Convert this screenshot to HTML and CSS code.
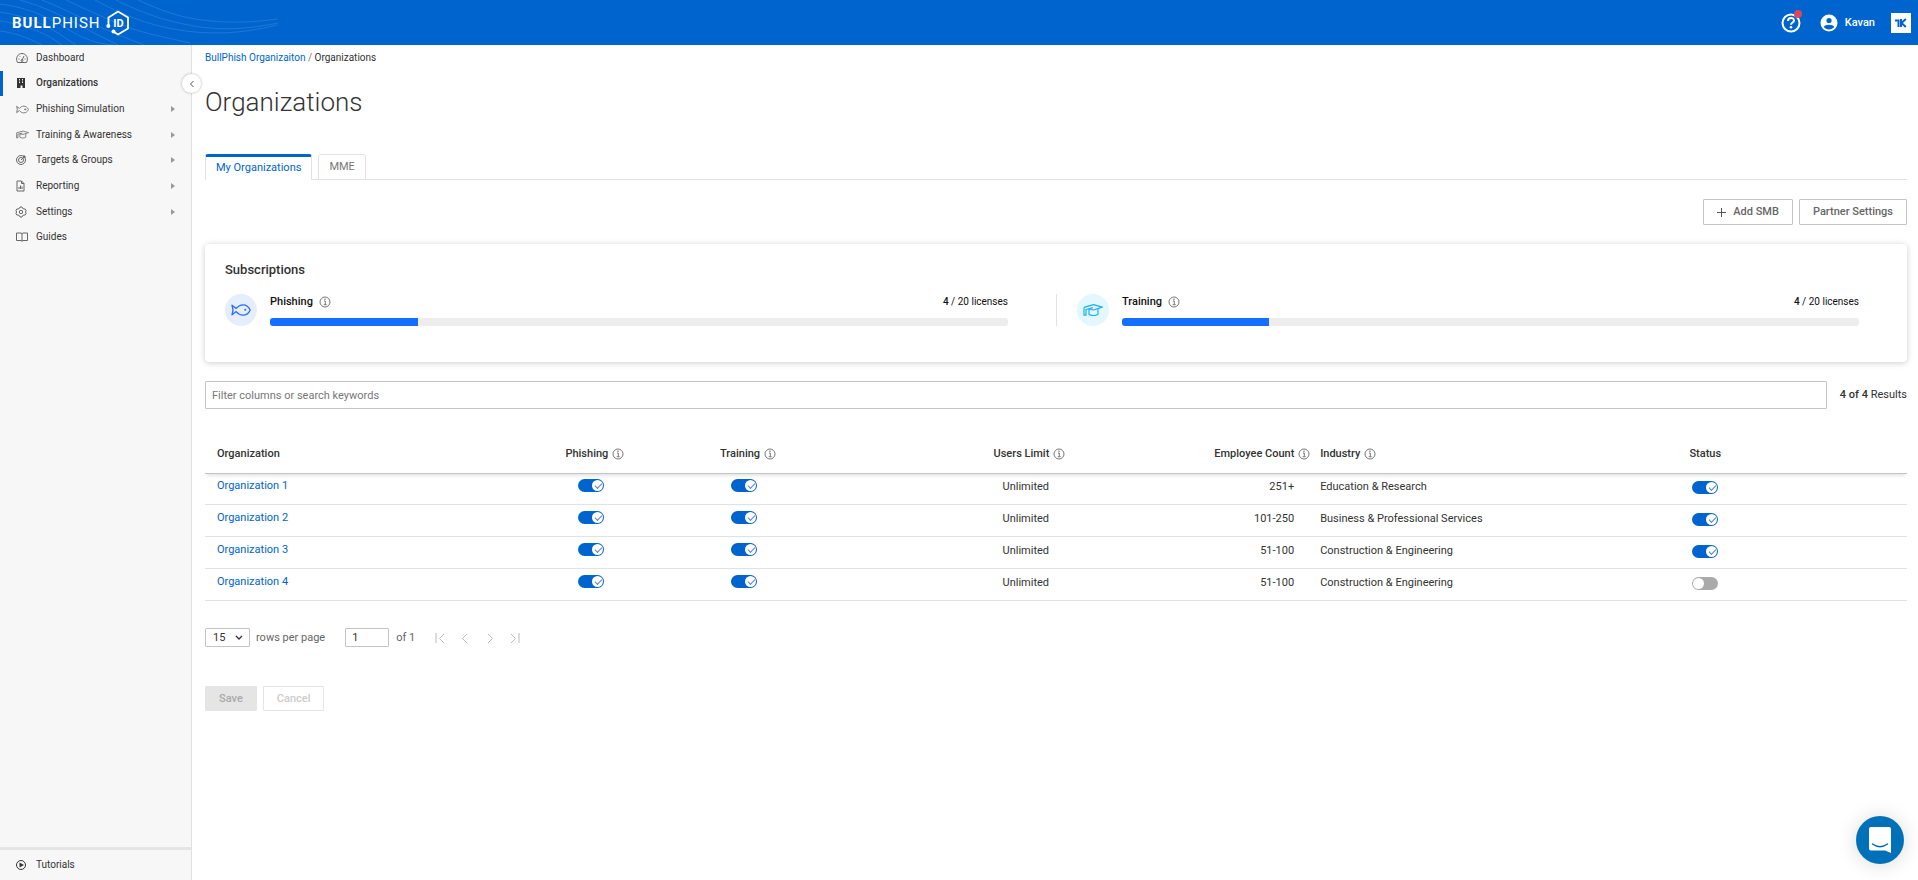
FILE: index.html
```html
<!DOCTYPE html>
<html lang="en">
<head>
    <meta charset="UTF-8">
    <meta name="viewport" content="width=device-width, initial-scale=1.0">
    <title>Organizations - BullPhish ID</title>
    <link rel="stylesheet" href="styles.css">
</head>
<body>
    <!-- Shared icons -->
    <svg class="sprite" aria-hidden="true">
        <symbol id="info" viewBox="0 0 12 12">
            <circle cx="6" cy="6" r="5" fill="none" stroke="currentColor"/>
            <path d="M5 5h1.3v3.5M4.7 8.7h3" fill="none" stroke="currentColor"/>
            <circle cx="6" cy="3.3" r=".8" fill="currentColor"/>
        </symbol>
        <symbol id="fish" viewBox="0 0 20 12">
            <path d="M1 1.2 5.2 4.4C7.300 1.900 9.600 .8 12 .8c3.200 0 5.900 2.200 7.200 5.200-1.300 3-4 5.200-7.200 5.200-2.400 0-4.700-1.100-6.800-3.600L1 10.800 2 6z" fill="none" stroke="currentColor" stroke-width="1.300" stroke-linejoin="round"/>
            <circle cx="14.200" cy="5.800" r="1" fill="currentColor"/>
        </symbol>
        <symbol id="cap" viewBox="0 0 20 12">
            <path d="M1 3.400 10.500.7l8.800 2.400-8.800 2.900-4.500-1M6 5.500v4.700c2.500 1.600 6.500 1.600 9 0V5.300M1 3.400v7.800h2V5.500l7-1.800" fill="none" stroke="currentColor" stroke-width="1.200" stroke-linejoin="round"/>
        </symbol>
    </svg>

    <header class="topbar">
        <svg class="waves" viewBox="0 0 280 45" aria-hidden="true">
            <path d="M0 4c30 4 50 14 66 24s30 16 48 17M0 12c26 4 44 12 58 21l18 12M0 21c22 3 36 9 50 16l12 8M0 31c16 2 28 7 42 14M20 0c34 10 54 22 74 33l24 12M42 0c30 12 50 24 74 34l28 11M66 0c30 14 54 26 84 34l40 9M95 0c26 14 52 25 84 30s62 4 98-5M116 0c24 12 48 21 78 26s54 3 84-3M138 0c22 10 40 17 64 20s48 3 75-1"/>
        </svg>
        <a href="#" class="logo">
            <span class="logo-text"><b>BULL</b>PHISH</span>
            <svg width="24" height="26" viewBox="0 0 24 26" aria-hidden="true">
                <path d="M2.500 15V7.500L12 1.500l10 6v11L12 24.500 8 22" fill="none" stroke="#fff" stroke-width="1.800"/>
                <circle cx="2.300" cy="16" r="2" fill="#fff"/>
                <circle cx="7.500" cy="21.500" r="2" fill="#fff"/>
                <text x="12.500" y="17" class="logo-id">ID</text>
            </svg>
        </a>
        <div class="topbar-right">
            <button class="icon-button help" aria-label="Help">
                <svg width="20" height="20" viewBox="0 0 20 20">
                    <circle cx="10" cy="10" r="8.500" fill="none" stroke="#fff" stroke-width="2"/>
                    <path d="M7 8c0-4 6-4 6-.5 0 2-3 2-3 4.200" fill="none" stroke="#fff" stroke-width="2"/>
                    <circle cx="10" cy="14.300" r="1.300" fill="#fff"/>
                </svg>
                <span class="badge"></span>
            </button>
            <button class="icon-button user">
                <svg width="18" height="18" viewBox="0 0 18 18">
                    <circle cx="9" cy="9" r="8.500" fill="#fff"/>
                    <circle cx="9" cy="6.500" r="2.600" fill="#0064ce"/>
                    <path d="M3.800 13c1-3 9.400-3 10.400 0-2.500 3.300-7.900 3.300-10.400 0z" fill="#0064ce"/>
                </svg>
                Kavan
            </button>
            <button class="icon-button" aria-label="Switch application">
                <svg width="20" height="20" viewBox="0 0 20 20">
                    <path d="M0 0h20v20H0z" fill="#fff"/>
                    <path d="M4 7.500h3.500V14M10 6v8M14.800 6 10.500 10l4.300 4" fill="none" stroke="#0064ce" stroke-width="2"/>
                </svg>
            </button>
        </div>
    </header>

    <div class="layout">
        <aside class="sidebar">
            <nav class="menu">
                <a href="#">
                    <svg width="12" height="12" viewBox="0 0 12 12"><path d="M1.500 10.500C-1 6 2 1.500 6 1.500s7 4.500 4.500 9zM6 8l2-4M2.500 7h1M8.500 7h1M3.500 4l.6.6"/><circle cx="6" cy="8.500" r="1"/></svg>
                    <span>Dashboard</span>
                </a>
                <a href="#" class="active">
                    <svg width="12" height="12" viewBox="0 0 12 12"><path d="M1 1h8v10H6.500V8.500h-2V11H1z" fill="currentColor" stroke="none"/><path d="M3.500 2v5M6.500 2v5" stroke="#f7f7f7" stroke-dasharray="1.500 1"/></svg>
                    <span>Organizations</span>
                </a>
                <a href="#">
                    <svg width="13" height="9"><use href="#fish"/></svg>
                    <span>Phishing Simulation</span><i class="caret"></i>
                </a>
                <a href="#">
                    <svg width="13" height="9"><use href="#cap"/></svg>
                    <span>Training &amp; Awareness</span><i class="caret"></i>
                </a>
                <a href="#">
                    <svg width="12" height="12" viewBox="0 0 12 12"><circle cx="5" cy="6" r="4.500"/><circle cx="5" cy="6" r="2.500"/><path d="M5 6l4-4M8 1v2h2"/></svg>
                    <span>Targets &amp; Groups</span><i class="caret"></i>
                </a>
                <a href="#">
                    <svg width="12" height="12" viewBox="0 0 12 12"><path d="M1 1h4.500l2.500 2.500v7.500H1zM5.500 1v2.500H8M3 9V7M4.500 9V5.500M6 9V6.500"/></svg>
                    <span>Reporting</span><i class="caret"></i>
                </a>
                <a href="#">
                    <svg width="12" height="12" viewBox="0 0 12 12"><path d="M4 1h2l.5 1.300 1.500.7L9.200 3l1 1.800-.8 1.200.8 1.200-1 1.800L8 9l-1.500.7L6 11H4l-.5-1.300L2 9 .8 9-.1 7.200.7 6-.1 4.800.8 3 2 3l1.500-.7z"/><circle cx="5" cy="6" r="1.700"/></svg>
                    <span>Settings</span><i class="caret"></i>
                </a>
                <a href="#">
                    <svg width="12" height="10" viewBox="0 0 12 10"><path d="M.5 1H5l1 .7L7 1h4.500v7.500H7l-1 .8-1-.8H.5zM6 1.700v7.500"/></svg>
                    <span>Guides</span>
                </a>
            </nav>
            <a href="#" class="tutorials">
                <svg width="12" height="12" viewBox="0 0 12 12"><circle cx="5" cy="6" r="4.500"/><path d="M3.500 3.500 8 6 3.500 8.500z" fill="currentColor" stroke="none"/></svg>
                <span>Tutorials</span>
            </a>
            <button class="collapse" aria-label="Collapse menu">
                <svg width="6" height="8" viewBox="0 0 6 8"><path d="M4.500 1 1.500 4l3 3" fill="none" stroke="#555"/></svg>
            </button>
        </aside>

        <main class="content">
            <div class="breadcrumb"><a href="#">BullPhish Organizaiton</a> <span>/</span> Organizations</div>
            <h1>Organizations</h1>

            <div class="tabs" role="tablist">
                <button class="tab selected" role="tab" aria-selected="true">My Organizations</button>
                <button class="tab" role="tab" aria-selected="false">MME</button>
            </div>

            <div class="actions">
                <button class="btn">
                    <svg width="9" height="9" viewBox="0 0 9 9"><path d="M4.500 0v9M0 4.500h9" stroke="#555"/></svg>
                    Add SMB
                </button>
                <button class="btn">Partner Settings</button>
            </div>

            <section class="card">
                <h2>Subscriptions</h2>
                <div class="subscriptions">
                    <div class="subscription">
                        <div class="round phishing"><svg width="20" height="12"><use href="#fish"/></svg></div>
                        <div class="usage">
                            <div class="usage-head">
                                <h3>Phishing <svg class="info"><use href="#info"/></svg></h3>
                                <span><b>4</b> / 20 licenses</span>
                            </div>
                            <div class="bar"><div class="fill" style="width: 20%"></div></div>
                        </div>
                    </div>
                    <div class="subscription">
                        <div class="round training"><svg width="20" height="12"><use href="#cap"/></svg></div>
                        <div class="usage">
                            <div class="usage-head">
                                <h3>Training <svg class="info"><use href="#info"/></svg></h3>
                                <span><b>4</b> / 20 licenses</span>
                            </div>
                            <div class="bar"><div class="fill" style="width: 20%"></div></div>
                        </div>
                    </div>
                </div>
            </section>

            <div class="filter">
                <input type="text" placeholder="Filter columns or search keywords" aria-label="Filter">
                <span><b>4 of 4</b> Results</span>
            </div>

            <table class="orgs">
                <thead>
                    <tr>
                        <th class="col-org">Organization</th>
                        <th class="col-switch">Phishing <svg class="info"><use href="#info"/></svg></th>
                        <th class="col-switch">Training <svg class="info"><use href="#info"/></svg></th>
                        <th class="col-limit num">Users Limit <svg class="info"><use href="#info"/></svg></th>
                        <th class="col-count num">Employee Count <svg class="info"><use href="#info"/></svg></th>
                        <th class="col-industry">Industry <svg class="info"><use href="#info"/></svg></th>
                        <th class="col-status">Status</th>
                    </tr>
                </thead>
                <tbody>
                    <tr>
                        <td class="col-org"><a href="#">Organization 1</a></td>
                        <td class="col-switch"><input type="checkbox" class="switch" aria-label="Organization 1 phishing" checked></td>
                        <td class="col-switch"><input type="checkbox" class="switch" aria-label="Organization 1 training" checked></td>
                        <td class="num">Unlimited</td>
                        <td class="num">251+</td>
                        <td class="col-industry">Education &amp; Research</td>
                        <td class="col-status"><input type="checkbox" class="switch" aria-label="Organization 1 status" checked></td>
                    </tr>
                    <tr>
                        <td class="col-org"><a href="#">Organization 2</a></td>
                        <td class="col-switch"><input type="checkbox" class="switch" aria-label="Organization 2 phishing" checked></td>
                        <td class="col-switch"><input type="checkbox" class="switch" aria-label="Organization 2 training" checked></td>
                        <td class="num">Unlimited</td>
                        <td class="num">101-250</td>
                        <td class="col-industry">Business &amp; Professional Services</td>
                        <td class="col-status"><input type="checkbox" class="switch" aria-label="Organization 2 status" checked></td>
                    </tr>
                    <tr>
                        <td class="col-org"><a href="#">Organization 3</a></td>
                        <td class="col-switch"><input type="checkbox" class="switch" aria-label="Organization 3 phishing" checked></td>
                        <td class="col-switch"><input type="checkbox" class="switch" aria-label="Organization 3 training" checked></td>
                        <td class="num">Unlimited</td>
                        <td class="num">51-100</td>
                        <td class="col-industry">Construction &amp; Engineering</td>
                        <td class="col-status"><input type="checkbox" class="switch" aria-label="Organization 3 status" checked></td>
                    </tr>
                    <tr>
                        <td class="col-org"><a href="#">Organization 4</a></td>
                        <td class="col-switch"><input type="checkbox" class="switch" aria-label="Organization 4 phishing" checked></td>
                        <td class="col-switch"><input type="checkbox" class="switch" aria-label="Organization 4 training" checked></td>
                        <td class="num">Unlimited</td>
                        <td class="num">51-100</td>
                        <td class="col-industry">Construction &amp; Engineering</td>
                        <td class="col-status"><input type="checkbox" class="switch" aria-label="Organization 4 status"></td>
                    </tr>
                </tbody>
            </table>

            <div class="pager">
                <div class="select-box">
                    <select id="rows"><option>15</option></select>
                    <svg width="8" height="6" viewBox="0 0 8 6"><path d="M1 1l3 3 3-3" fill="none" stroke="#333" stroke-width="1.300"/></svg>
                </div>
                <label for="rows">rows per page</label>
                <input type="text" id="page" value="1">
                <label for="page">of 1</label>
                <div class="pager-buttons">
                    <button aria-label="First page"><svg width="10" height="12" viewBox="0 0 10 12"><path d="M1 1v10M9 2 4.500 6.500 9 11"/></svg></button>
                    <button aria-label="Previous page"><svg width="10" height="12" viewBox="0 0 10 12"><path d="M7 2 2.500 6.500 7 11"/></svg></button>
                    <button aria-label="Next page"><svg width="10" height="12" viewBox="0 0 10 12"><path d="M3 2l4.500 4.500L3 11"/></svg></button>
                    <button aria-label="Last page"><svg width="10" height="12" viewBox="0 0 10 12"><path d="M9 1v10M1 2l4.500 4.500L1 11"/></svg></button>
                </div>
            </div>

            <div class="form-buttons">
                <button class="btn save" disabled>Save</button>
                <button class="btn cancel" disabled>Cancel</button>
            </div>
        </main>
    </div>

    <button class="chat" aria-label="Open chat">
        <svg width="22" height="26" viewBox="0 0 22 26">
            <path d="M2 0h18a2 2 0 0 1 2 2v24l-6-2.500H2a2 2 0 0 1-2-2V2a2 2 0 0 1 2-2z" fill="#fff"/>
            <path d="M3.500 17c4.500 3.500 10.500 3.500 15 0" fill="none" stroke="#0071b9" stroke-width="1.500" stroke-linecap="round"/>
        </svg>
    </button>
</body>
</html>
```
FILE: styles.css
```css
/* Global */
* {
    margin: 0;
    padding: 0;
    box-sizing: border-box;
}
body {
    font-family: Roboto, sans-serif;
    font-size: 11px;
    line-height: 16px;
    color: #333;
    background-color: #fff;
    display: flex;
    flex-direction: column;
    min-height: 100vh;
}
a {
    color: #0064ce;
    text-decoration: none;
}
b {
    font-weight: 500;
}
button, input, select {
    font: inherit;
    color: inherit;
}
button {
    cursor: pointer;
}
.sprite {
    position: absolute;
    width: 0;
    height: 0;
}
.info {
    width: 12px;
    height: 12px;
    color: #777;
}

/* Top bar */
.topbar {
    position: relative;
    height: 45px;
    padding: 0 7px 0 12px;
    background-color: #0064ce;
    color: #fff;
    display: flex;
    align-items: center;
    justify-content: space-between;
}
.waves {
    position: absolute;
    left: 0;
    top: 0;
    width: 280px;
    height: 45px;
    fill: none;
    stroke: #1f78d6;
}
.logo {
    position: relative;
    display: flex;
    align-items: center;
    gap: 5px;
    color: #fff;
}
.logo-text {
    font-size: 15px;
    font-weight: 400;
    letter-spacing: 1px;
}
.logo-text b {
    font-weight: 700;
}
.logo-id {
    font-size: 11px;
    font-weight: 700;
    fill: #fff;
    text-anchor: middle;
}
.topbar-right {
    display: flex;
    align-items: center;
    gap: 16px;
}
.icon-button {
    position: relative;
    display: flex;
    align-items: center;
    gap: 7px;
    border: none;
    background: none;
    font-weight: 500;
}
.help {
    margin-right: 3px;
}
.badge {
    position: absolute;
    top: -3px;
    right: -1px;
    width: 8px;
    height: 8px;
    border-radius: 50%;
    background-color: #d9485a;
}

/* Layout */
.layout {
    flex: 1;
    display: flex;
}
.sidebar {
    position: relative;
    flex: none;
    width: 192px;
    background-color: #f7f7f7;
    border-right: 1px solid #e0e0e0;
    font-size: 10px;
    display: flex;
    flex-direction: column;
    justify-content: space-between;
}
.menu {
    height: 205px;
    display: flex;
    flex-direction: column;
}
.menu a {
    flex: 1;
    padding: 0 16px 0 13px;
    border-left: 3px solid transparent;
    color: #333;
    display: flex;
    align-items: center;
}
.menu svg, .tutorials svg {
    fill: none;
    stroke: currentColor;
    color: #666;
    overflow: visible;
}
.menu span, .tutorials span {
    margin-left: 8px;
}
.menu svg[width="13"] + span {
    margin-left: 7px;
}
.menu .active {
    border-left-color: #0064ce;
    font-weight: 500;
}
.menu .active svg {
    color: #333;
}
.caret {
    margin-left: auto;
    border: 3px solid transparent;
    border-left: 4px solid #999;
    border-right: none;
}
.tutorials {
    height: 33px;
    padding: 0 16px;
    border-top: 3px solid #e5e5e5;
    color: #333;
    display: flex;
    align-items: center;
}
.tutorials svg {
    color: #333;
}
.collapse {
    position: absolute;
    top: 29px;
    right: -10px;
    width: 19px;
    height: 19px;
    border: none;
    border-radius: 50%;
    background-color: #fff;
    box-shadow: 0 0 3px rgba(0, 0, 0, 0.3);
    display: flex;
    align-items: center;
    justify-content: center;
}
.content {
    flex: 1;
    padding: 5px 11px 0 13px;
}

/* Page heading and tabs */
.breadcrumb {
    font-size: 10px;
}
.breadcrumb span {
    color: #777;
}
h1 {
    margin-top: 20px;
    font-size: 26px;
    font-weight: 300;
    line-height: 32px;
}
.tabs {
    margin-top: 36px;
    height: 26px;
    border-bottom: 1px solid #e2e2e2;
    display: flex;
    gap: 6px;
}
.tab {
    height: 26px;
    padding: 0 10px;
    border: 1px solid #e2e2e2;
    border-radius: 3px 3px 0 0;
    background-color: #fff;
    color: #777;
}
.tab.selected {
    padding-bottom: 2px;
    border-top: 3px solid #0064ce;
    border-bottom: none;
    color: #0064ce;
}

/* Buttons */
.btn {
    height: 26px;
    padding: 0 13px;
    border: 1px solid #c4c4c4;
    border-radius: 1px;
    background-color: #fff;
    font-weight: 500;
    color: #666;
    display: flex;
    align-items: center;
    gap: 7px;
}
.actions {
    margin-top: 19px;
    display: flex;
    justify-content: flex-end;
    gap: 6px;
}

/* Subscriptions */
.card {
    margin-top: 19px;
    padding: 17px 0 36px;
    border-radius: 4px;
    box-shadow: 0 1px 6px rgba(0, 0, 0, 0.2);
}
.card h2 {
    margin-left: 20px;
    font-size: 13px;
    font-weight: 500;
    line-height: 18px;
}
.subscriptions {
    margin-top: 15px;
    display: grid;
    grid-template-columns: 1fr 1fr;
}
.subscription {
    padding: 0 48px 0 20px;
    display: flex;
    gap: 13px;
}
.subscription + .subscription {
    border-left: 1px solid #e2e2e2;
}
.round {
    width: 32px;
    height: 32px;
    border-radius: 50%;
    display: flex;
    align-items: center;
    justify-content: center;
}
.phishing {
    background-color: #e6eefc;
    color: #2b6bff;
}
.training {
    background-color: #e3f7fe;
    color: #1cb0f0;
}
.usage {
    flex: 1;
    display: flex;
    flex-direction: column;
    justify-content: space-between;
}
.usage-head {
    font-size: 10px;
    color: #111;
    display: flex;
    justify-content: space-between;
}
.usage-head h3 {
    font-size: 11px;
    font-weight: 500;
    display: flex;
    align-items: center;
    gap: 6px;
}
.bar {
    height: 8px;
    border-radius: 3px;
    background-color: #ededed;
    overflow: hidden;
}
.fill {
    height: 8px;
    background-color: #146eff;
}

/* Filter */
.filter {
    margin-top: 19px;
    display: flex;
    align-items: center;
    gap: 13px;
}
.filter input {
    flex: 1;
    height: 28px;
    padding: 0 6px;
    border: 1px solid #c4c4c4;
    border-radius: 1px;
}
.filter input::placeholder {
    color: #777;
}

/* Table */
.orgs {
    width: 100%;
    margin-top: 25px;
    table-layout: fixed;
    border-collapse: separate;
    border-spacing: 0;
}
.orgs thead {
    box-shadow: 0 1px 0 #c4c4c4, 0 5px 3px -2px rgba(0, 0, 0, 0.1);
}
.orgs th {
    height: 39px;
    padding: 0 12px;
    font-weight: 500;
    text-align: left;
    white-space: nowrap;
}
.orgs td {
    height: 32px;
    padding: 6px 12px 0;
    border-bottom: 1px solid #e2e2e2;
    vertical-align: top;
}
.orgs .info {
    margin-left: 1px;
    vertical-align: -3px;
}
.orgs .num {
    text-align: right;
}
/* keeps the heading text in line with the right-aligned values */
.num .info {
    margin-right: -16px;
}
th.col-org {
    width: 18.4%;
}
th.col-switch {
    width: 9%;
}
th.col-limit {
    width: 13.9%;
}
th.col-count {
    width: 14.4%;
}
th.col-industry {
    width: 11.6%;
}
.orgs .col-switch, .orgs .col-status {
    text-align: center;
}
.orgs .col-industry {
    padding: 6px 0 0 14px;
    white-space: nowrap;
}
.orgs th.col-industry {
    padding-top: 0;
}
.orgs td.col-org {
    padding-top: 5px;
}
.orgs td.col-switch {
    padding: 6px 19px 0 12px;
}
.orgs td.col-status {
    padding-top: 8px;
}

/* Switch */
.switch {
    appearance: none;
    width: 26px;
    height: 13px;
    border-radius: 7px;
    background-color: #aaa;
    display: block;
    margin: 0 auto;
    position: relative;
    cursor: pointer;
}
.switch::before {
    content: "";
    position: absolute;
    top: 1px;
    left: 1px;
    width: 11px;
    height: 11px;
    border-radius: 50%;
    background-color: #fff;
}
.switch:checked {
    background-color: #0064ce;
}
.switch:checked::before {
    left: 14px;
}
.switch:checked::after {
    content: "";
    position: absolute;
    top: 4px;
    left: 17px;
    width: 6px;
    height: 3px;
    border-left: 1px solid #5585cf;
    border-bottom: 1px solid #5585cf;
    transform: rotate(-45deg);
}

/* Pager */
.pager {
    margin-top: 27px;
    color: #666;
    display: flex;
    align-items: center;
}
.pager select, .pager input {
    height: 19px;
    border: 1px solid #c4c4c4;
    border-radius: 1px;
    background-color: #fff;
    color: #333;
}
.select-box {
    position: relative;
    margin-right: 6px;
    display: flex;
}
.select-box svg {
    position: absolute;
    right: 7px;
    top: 7px;
    pointer-events: none;
}
.pager select {
    appearance: none;
    width: 45px;
    padding-left: 7px;
}
.pager input {
    width: 44px;
    margin: 0 7px 0 20px;
    padding: 0 6px;
}
.pager-buttons {
    margin-left: 20px;
    display: flex;
    gap: 15px;
}
.pager-buttons button {
    border: none;
    background: none;
    display: flex;
}
.pager-buttons svg {
    fill: none;
    stroke: #bbb;
}

/* Save / cancel */
.form-buttons {
    margin-top: 39px;
    display: flex;
    gap: 6px;
}
.form-buttons .btn {
    height: 25px;
}
.save {
    border-color: #e5e5e5;
    background-color: #e5e5e5;
    color: #aaa;
}
.cancel {
    border-color: #e5e5e5;
    color: #ccc;
}

/* Chat launcher */
.chat {
    position: fixed;
    right: 14px;
    bottom: 16px;
    width: 48px;
    height: 48px;
    border: none;
    border-radius: 50%;
    background-color: #0071b9;
    box-shadow: 0 1px 20px rgba(0, 0, 0, 0.15);
    display: flex;
    align-items: center;
    justify-content: center;
}
```
